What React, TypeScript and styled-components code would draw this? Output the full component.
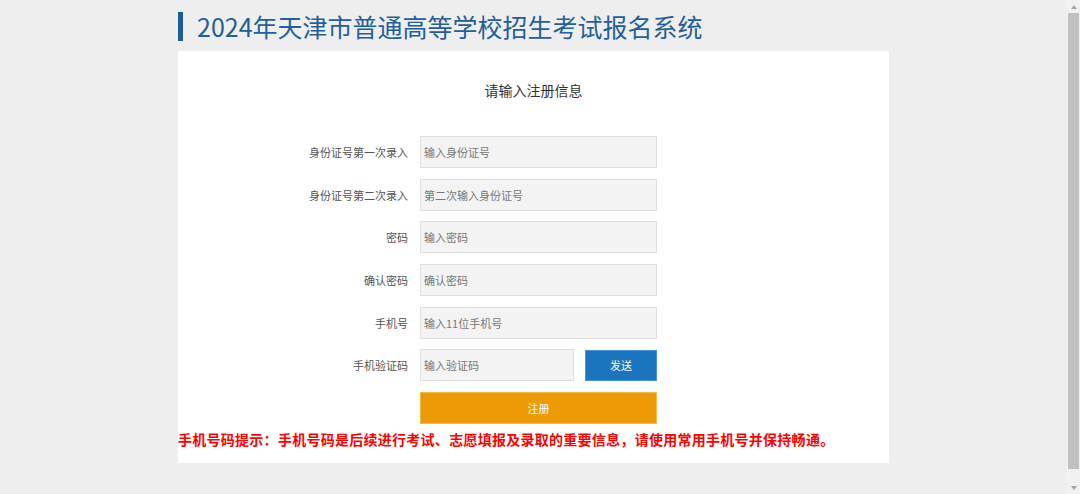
import React from "react";
import styled, { createGlobalStyle } from "styled-components";

const Global = createGlobalStyle`
  html, body { margin: 0; padding: 0; background: #eeeeee; overflow: hidden; }
  body { font-family: "Noto Sans CJK SC", "Noto Sans", sans-serif; }
  * { box-sizing: border-box; }
`;

const Shell = styled.div`
  display: flex;
  height: 100vh;
`;

const Main = styled.div`
  flex: 1;
  min-width: 0;
`;

const ScrollTrack = styled.div`
  width: 13px;
  height: 100%;
  background: #f1f1f1;
  display: flex;
  flex-direction: column;
  align-items: center;
  padding: 0 1px;
`;

const Arrow = styled.div<{ $down?: boolean }>`
  height: 13px;
  width: 100%;
  display: flex;
  align-items: center;
  justify-content: center;
  &::after {
    content: "";
    width: 0;
    height: 0;
    border-left: 3.5px solid transparent;
    border-right: 3.5px solid transparent;
    ${(p) =>
      p.$down
        ? "border-top: 4px solid #a3a3a3;"
        : "border-bottom: 4px solid #a3a3a3;"}
  }
`;

const Thumb = styled.div`
  flex: 1;
  width: 100%;
  background: #c1c1c1;
  margin-bottom: 12px;
`;

const Page = styled.div`
  width: 711px;
  margin: 0 auto;
  padding-top: 12px;
`;

const Title = styled.h1`
  margin: 0;
  border-left: 5px solid #1b5c9a;
  padding-left: 14px;
  height: 29px;
  font-size: 25px;
  line-height: 28px;
  font-weight: 400;
  color: #245f9b;
`;

const Panel = styled.div`
  margin-top: 10px;
  background: #ffffff;
  height: 412px;
  padding-top: 28px;
`;

const Heading = styled.div`
  text-align: center;
  font-size: 14px;
  line-height: 22px;
  color: #333;
`;

const Form = styled.div`
  margin-top: 35px;
  display: grid;
  grid-template-columns: 230px 237px;
  column-gap: 12px;
  row-gap: 10.7px;
`;

const Label = styled.label`
  text-align: right;
  font-size: 11px;
  line-height: 32px;
  color: #555;
  height: 32px;
`;

const Input = styled.input<{ $w?: number }>`
  width: ${(p) => (p.$w ? `${p.$w}px` : "100%")};
  height: 32px;
  border: 1px solid #dedede;
  background: #f3f3f3;
  padding: 0 3px;
  font-family: inherit;
  font-size: 11px;
  color: #333;
  outline: none;
  &::placeholder { color: #777; }
`;

const CodeRow = styled.div`
  display: flex;
  justify-content: space-between;
  align-items: center;
`;

const Button = styled.button<{ $bg: string; $border: string }>`
  height: 31px;
  border: 1px solid ${(p) => p.$border};
  background: ${(p) => p.$bg};
  color: #fff;
  font-family: inherit;
  font-size: 11px;
  padding: 0;
  cursor: pointer;
`;

const SendButton = styled(Button)`
  width: 72px;
`;

const SubmitButton = styled(Button)`
  width: 100%;
  height: 32px;
`;

const Tip = styled.div`
  margin-top: 4px;
  color: #ff0000;
  font-weight: 700;
  font-size: 14px;
  letter-spacing: 0.27px;
  line-height: 22px;
  white-space: nowrap;
`;

const fields = [
  { label: "身份证号第一次录入", ph: "输入身份证号" },
  { label: "身份证号第二次录入", ph: "第二次输入身份证号" },
  { label: "密码", ph: "输入密码", type: "password" },
  { label: "确认密码", ph: "确认密码", type: "password" },
  { label: "手机号", ph: "输入11位手机号" },
];

export default function App() {
  return (
    <>
      <Global />
      <Shell>
        <Main>
          <Page>
            <Title>2024年天津市普通高等学校招生考试报名系统</Title>
            <Panel>
              <Heading>请输入注册信息</Heading>
              <Form>
                {fields.map((f) => (
                  <React.Fragment key={f.label}>
                    <Label>{f.label}</Label>
                    <Input placeholder={f.ph} type={f.type || "text"} />
                  </React.Fragment>
                ))}
                <Label>手机验证码</Label>
                <CodeRow>
                  <Input $w={154} placeholder="输入验证码" />
                  <SendButton $bg="#1a74be" $border="#4d92d2">发送</SendButton>
                </CodeRow>
                <span />
                <SubmitButton $bg="#ec9b06" $border="#f4b84a">注册</SubmitButton>
              </Form>
              <Tip>手机号码提示：手机号码是后续进行考试、志愿填报及录取的重要信息，请使用常用手机号并保持畅通。</Tip>
            </Panel>
          </Page>
        </Main>
        <ScrollTrack>
          <Arrow />
          <Thumb />
          <Arrow $down />
        </ScrollTrack>
      </Shell>
    </>
  );
}
